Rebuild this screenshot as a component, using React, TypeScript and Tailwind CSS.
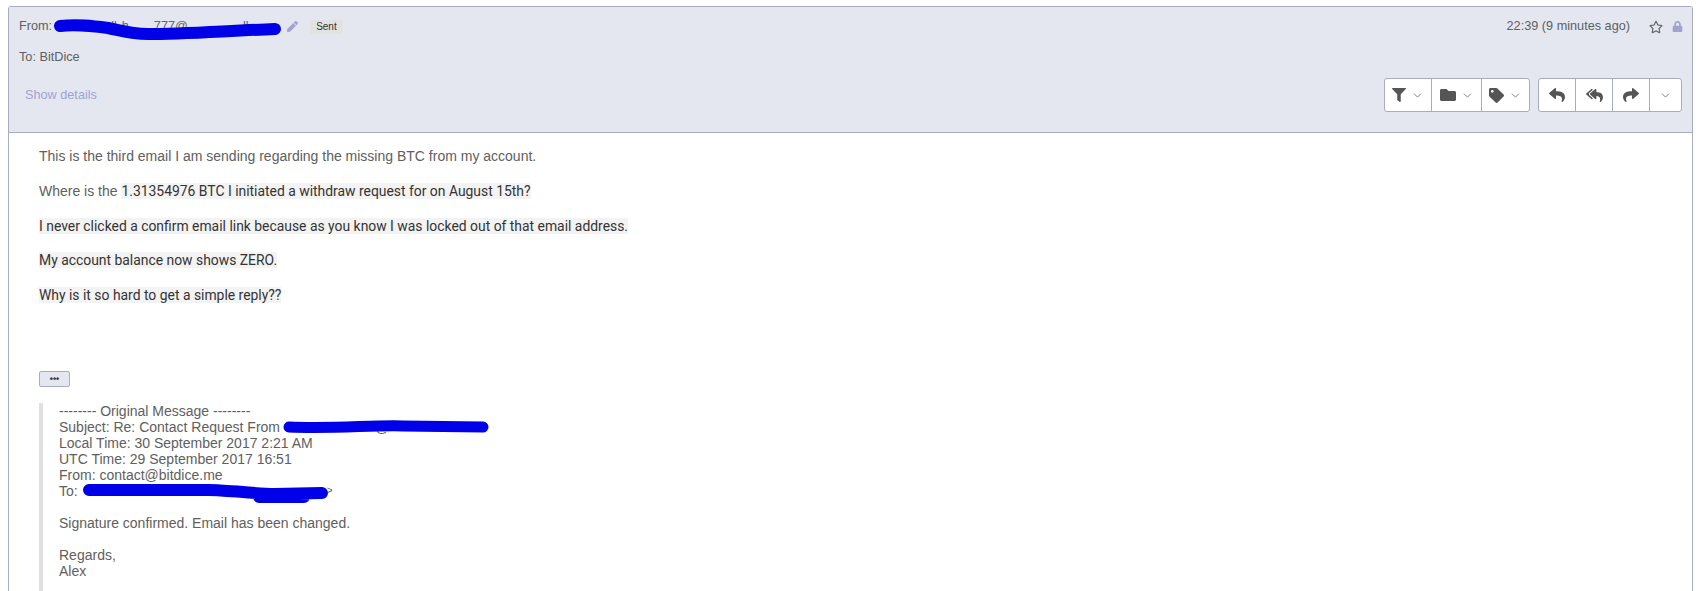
import React from 'react';
import { ChevronDown } from 'lucide-react';
import { FaFilter, FaFolder, FaTag, FaReply, FaReplyAll, FaShare, FaPen, FaLock, FaRegStar } from 'react-icons/fa';

// blue marker scribble laid over the hidden addresses
const Redaction = ({ d, width }: { d: string; width: number }) => (
  <svg
    className="absolute left-0 top-[-8px] h-[32px] w-full overflow-visible"
    fill="none"
    stroke="#0000e8"
    strokeWidth={width}
    strokeLinecap="round"
    strokeLinejoin="round"
  >
    <path d={d} />
  </svg>
);

const Chevron = () => <ChevronDown className="h-[13px] w-[13px] text-[#666]" strokeWidth={1.5} />;

const highlight = "bg-[#f3f3f3] font-['Roboto',sans-serif] text-[13.9px] text-[#333]";

const App: React.FC = () => {
  return (
    <div className="h-[591px] overflow-hidden bg-white pl-[8px] pr-[12px] pt-[6px] font-['Liberation_Sans',Arial,sans-serif] text-[14px] text-[#606060]">
      <div className="h-[620px] rounded-t-[3px] border-x border-t border-[#a9acbf]">
        {/* Header */}
        <div className="h-[126px] border-b border-[#a9acbf] bg-[#e4e7f0] pl-[10px] text-[12.7px]">
          <div className="flex h-[40px] items-center justify-between pr-[9px]">
            <div className="flex items-center">
              <span>From:</span>
              <span className="relative ml-[1px] flex h-[16px] w-[230px] items-center whitespace-nowrap text-[#666]">
                <span className="ml-[58px]">ll</span>
                <span className="ml-[5px]">h</span>
                <span className="ml-[25px]">777@</span>
                <span className="ml-[55px]">ll</span>
                <Redaction width={12} d="M7,15 C25,13 40,15 55,17 C70,20 77,23 95,23 C130,23 170,20 222,18" />
              </span>
              <FaPen className="ml-[4px] h-[11px] w-[11px] text-[#a3a3d0]" />
              <span className="ml-[12px] rounded-[2px] bg-[#e2e2e0] px-[6px] py-[1px] text-[10px] leading-[12px] text-[#333]">Sent</span>
            </div>
            <div className="flex items-center">
              <span>22:39 (9 minutes ago)</span>
              <FaRegStar className="ml-[19px] h-[14px] w-[14px] text-[#666]" />
              <FaLock className="ml-[9px] h-[11px] w-[11px] text-[#a3a3d0]" />
            </div>
          </div>
          <div className="h-[31px] leading-[20px]">To: BitDice</div>
          <div className="flex items-start justify-between pr-[10px]">
            <a className="ml-[6px] mt-[8px] text-[#a0a3d2]">Show details</a>
            <div className="flex gap-[8px]">
              <div className="flex h-[34px] divide-x divide-[#a9acbf] rounded-[3px] border border-[#a9acbf] bg-white text-[#555]">
                <div className="flex w-[47px] items-center justify-center gap-[5px]"><FaFilter className="h-[14px] w-[14px]" /><Chevron /></div>
                <div className="flex w-[50px] items-center justify-center gap-[5px]"><FaFolder className="h-[16px] w-[16px]" /><Chevron /></div>
                <div className="flex w-[47px] items-center justify-center gap-[5px]"><FaTag className="h-[15px] w-[15px]" /><Chevron /></div>
              </div>
              <div className="flex h-[34px] divide-x divide-[#a9acbf] rounded-[3px] border border-[#a9acbf] bg-white text-[#555]">
                <div className="flex w-[37px] items-center justify-center"><FaReply className="h-[16px] w-[16px]" /></div>
                <div className="flex w-[37px] items-center justify-center"><FaReplyAll className="h-[17px] w-[17px]" /></div>
                <div className="flex w-[37px] items-center justify-center"><FaShare className="h-[16px] w-[16px]" /></div>
                <div className="flex w-[31px] items-center justify-center"><Chevron /></div>
              </div>
            </div>
          </div>
        </div>

        {/* Body */}
        <div className="pl-[30px] pt-[13px] leading-[21px]">
          <p className="mb-[13.8px]">This is the third email I am sending regarding the missing BTC from my account.</p>
          <p className="mb-[13.8px]">
            Where is the{' '}
            <span className={highlight}>1.31354976 BTC I initiated a withdraw request for on August 15th?</span>
          </p>
          <p className="mb-[13.8px]">
            <span className={highlight}>I never clicked a confirm email link because as you know I was locked out of that email address.</span>
          </p>
          <p className="mb-[13.8px]">
            <span className={highlight}>My account balance now shows ZERO.</span>
          </p>
          <p>
            <span className={highlight}>Why is it so hard to get a simple reply??</span>
          </p>

          <button className="mt-[65px] flex h-[16px] w-[31px] items-center justify-center rounded-[2px] border border-[#a9acbf] bg-[#e4e7f0] text-[9px] font-bold leading-none text-[#333]">
            •••
          </button>

          <blockquote className="mt-[16px] border-l-4 border-[#e0e0e0] pl-[16px] leading-[16px]">
            <div>-------- Original Message --------</div>
            <div className="flex items-center">
              Subject: Re: Contact Request From
              <span className="relative ml-[3px] flex h-[16px] w-[206px] items-center">
                <span className="ml-[92px]">@</span>
                <Redaction width={11} d="M6,16 C50,18 90,14 120,15 L200,16" />
              </span>
            </div>
            <div>Local Time: 30 September 2017 2:21 AM</div>
            <div>UTC Time: 29 September 2017 16:51</div>
            <div>From: contact@bitdice.me</div>
            <div className="flex items-center">
              To:
              <span className="relative ml-[1px] flex h-[16px] w-[256px] items-center">
                <span className="ml-[248px] text-[10px]">&gt;</span>
                <Redaction width={12} d="M10,15 L130,15 C160,16 180,19 195,19 L243,18 M180,22 L225,22" />
              </span>
            </div>
            <div className="mt-[16px]">Signature confirmed. Email has been changed.</div>
            <div className="mt-[16px]">Regards,</div>
            <div>Alex</div>
            <div className="h-[40px]" />
          </blockquote>
        </div>
      </div>
    </div>
  );
};

export default App;
